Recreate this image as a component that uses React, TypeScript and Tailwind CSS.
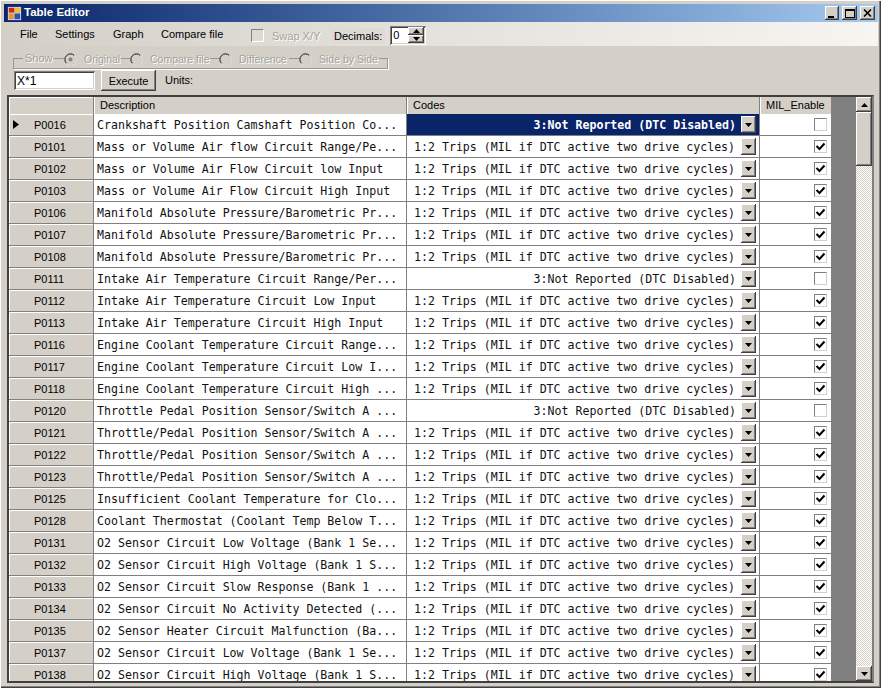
const raised =
  "shadow-[inset_-1px_-1px_#404040,inset_1px_1px_#ffffff,inset_-2px_-2px_#808080,inset_2px_2px_#d4d0c8] bg-[#d4d0c8]";
const sunken =
  "shadow-[inset_1px_1px_#808080,inset_-1px_-1px_#ffffff,inset_2px_2px_#404040,inset_-2px_-2px_#d4d0c8]";

const TRIPS = "1:2 Trips (MIL if DTC active two drive cycles)";
const OFF = "3:Not Reported (DTC Disabled)";

const rows = [
  { code: "P0016", desc: "Crankshaft Position Camshaft Position Co...", off: true },
  { code: "P0101", desc: "Mass or Volume Air flow Circuit Range/Pe..." },
  { code: "P0102", desc: "Mass or Volume Air Flow Circuit low Input" },
  { code: "P0103", desc: "Mass or Volume Air Flow Circuit High Input" },
  { code: "P0106", desc: "Manifold Absolute Pressure/Barometric Pr..." },
  { code: "P0107", desc: "Manifold Absolute Pressure/Barometric Pr..." },
  { code: "P0108", desc: "Manifold Absolute Pressure/Barometric Pr..." },
  { code: "P0111", desc: "Intake Air Temperature Circuit Range/Per...", off: true },
  { code: "P0112", desc: "Intake Air Temperature Circuit Low Input" },
  { code: "P0113", desc: "Intake Air Temperature Circuit High Input" },
  { code: "P0116", desc: "Engine Coolant Temperature Circuit Range..." },
  { code: "P0117", desc: "Engine Coolant Temperature Circuit Low I..." },
  { code: "P0118", desc: "Engine Coolant Temperature Circuit High ..." },
  { code: "P0120", desc: "Throttle Pedal Position Sensor/Switch A ...", off: true },
  { code: "P0121", desc: "Throttle/Pedal Position Sensor/Switch A ..." },
  { code: "P0122", desc: "Throttle/Pedal Position Sensor/Switch A ..." },
  { code: "P0123", desc: "Throttle/Pedal Position Sensor/Switch A ..." },
  { code: "P0125", desc: "Insufficient Coolant Temperature for Clo..." },
  { code: "P0128", desc: "Coolant Thermostat (Coolant Temp Below T..." },
  { code: "P0131", desc: "O2 Sensor Circuit Low Voltage (Bank 1 Se..." },
  { code: "P0132", desc: "O2 Sensor Circuit High Voltage (Bank 1 S..." },
  { code: "P0133", desc: "O2 Sensor Circuit Slow Response (Bank 1 ..." },
  { code: "P0134", desc: "O2 Sensor Circuit No Activity Detected (..." },
  { code: "P0135", desc: "O2 Sensor Heater Circuit Malfunction (Ba..." },
  { code: "P0137", desc: "O2 Sensor Circuit Low Voltage (Bank 1 Se..." },
  { code: "P0138", desc: "O2 Sensor Circuit High Voltage (Bank 1 S..." },
];

function Arrow({ up = false }: { up?: boolean }) {
  return (
    <svg width="7" height="4" viewBox="0 0 7 4" className="block">
      <path d={up ? "M3.5 0L7 4H0z" : "M0 0h7L3.5 4z"} fill="#000" />
    </svg>
  );
}

function Radio({ on = false }: { on?: boolean }) {
  return (
    <svg width="13" height="13" viewBox="0 0 13 13" className="shrink-0">
      <circle cx="6.5" cy="6.5" r="5.5" fill="#d4d0c8" stroke="#808080" />
      <path d="M2.5 10.5A5.5 5.5 0 0 1 10.5 2.5" fill="none" stroke="#404040" />
      <path d="M2.5 10.5A5.5 5.5 0 0 0 10.5 2.5" fill="none" stroke="#ffffff" />
      {on && <circle cx="6.5" cy="6.5" r="2" fill="#808080" />}
    </svg>
  );
}

function Disabled({ children }: { children: string }) {
  return <span className="text-[#a5a29a] whitespace-nowrap [text-shadow:1px_1px_#ffffff]">{children}</span>;
}

function ShowOption({ label, on = false, className }: { label: string; on?: boolean; className: string }) {
  return (
    <div className={`flex items-center gap-[7px] bg-[#d4d0c8] h-[13px] -mt-[6px] text-[10.5px] ${className}`}>
      <Radio on={on} />
      <Disabled>{label}</Disabled>
    </div>
  );
}

function CellCheck({ checked }: { checked: boolean }) {
  return (
    <div className="w-[13px] h-[13px] bg-white border border-t-[#808080] border-l-[#808080] border-r-[#d4d0c8] border-b-[#d4d0c8] flex items-center justify-center">
      {checked && (
        <svg width="11" height="11" viewBox="0 0 11 11">
          <path d="M1.5 5L4.5 8L9.5 2.5" fill="none" stroke="#000" strokeWidth="2" />
        </svg>
      )}
    </div>
  );
}

function Row({ row, selected }: { row: (typeof rows)[number]; selected: boolean }) {
  return (
    <div className="flex h-[22px] shrink-0 w-[822px]">
      <div className="w-[85px] shrink-0 bg-[#d4d0c8] border-b border-r border-[#808080] shadow-[inset_1px_1px_#ffffff] relative flex items-center pl-[25px] pt-[1px]">
        {selected && (
          <svg width="6" height="9" viewBox="0 0 6 9" className="absolute left-[4px] top-[6px]">
            <path d="M0 0l6 4.5L0 9z" fill="#000" />
          </svg>
        )}
        {row.code}
      </div>
      <div className="w-[313px] shrink-0 bg-white border-b border-r border-[#808080] pl-[3px] pt-[2px] flex items-center font-['DejaVu_Sans_Mono',monospace] text-[11.6px] whitespace-pre text-[#111111]">
        {row.desc}
      </div>
      <div
        className={`w-[353px] shrink-0 border-b border-r border-[#808080] flex items-center pr-[3px] font-['DejaVu_Sans_Mono',monospace] text-[11.6px] whitespace-pre ${
          selected ? "bg-[#0a246a] text-white font-bold" : "bg-white text-[#111111]"
        }`}
      >
        <span className={`flex-1 pt-[2px] ${row.off ? "text-right pr-[5px]" : "pl-[7px]"}`}>{row.off ? OFF : TRIPS}</span>
        <div className={`w-[15px] h-[17px] flex items-center justify-center shrink-0 ${raised}`}>
          <Arrow />
        </div>
      </div>
      <div className="w-[71px] shrink-0 bg-white border-b border-[#808080] flex items-center pl-[54px]">
        <CellCheck checked={!row.off} />
      </div>
    </div>
  );
}

export default function App() {
  return (
    <div className="w-[881px] h-[688px] overflow-hidden bg-[#d4d0c8] font-['Liberation_Sans',sans-serif] text-[11px] text-black flex flex-col pt-[4px] pl-[4px] pr-[3px] pb-[5px] shadow-[inset_1px_1px_#ffffff,inset_-1px_-1px_#404040,inset_-2px_-2px_#808080]">
      {/* Title bar */}
      <div className="h-[18px] shrink-0 flex items-center bg-gradient-to-r from-[#0a246a] to-[#a6caf0] pl-[3px] pr-[3px]">
        <svg width="15" height="15" viewBox="0 0 16 16" className="shrink-0">
          <rect x="0.5" y="0.5" width="15" height="15" fill="#c8d0e8" stroke="#203080" />
          <rect x="2" y="2" width="6" height="5" fill="#d02818" />
          <rect x="8" y="2" width="6" height="5" fill="#f0c020" />
          <rect x="2" y="8" width="5" height="6" fill="#f09020" />
          <rect x="8" y="8" width="6" height="6" fill="#3050b0" />
        </svg>
        <span className="ml-[2px] text-white font-bold text-[11.5px]">Table Editor</span>
        <div className={`ml-auto w-[14px] h-[14px] flex items-end pb-[2px] pl-[3px] ${raised}`}>
          <div className="w-[6px] h-[2px] bg-black" />
        </div>
        <div className={`ml-[3px] w-[15px] h-[14px] flex items-center justify-center ${raised}`}>
          <div className="w-[10px] h-[9px] border border-t-2 border-black" />
        </div>
        <div className={`ml-[3px] w-[15px] h-[14px] flex items-center justify-center ${raised}`}>
          <svg width="9" height="8" viewBox="0 0 9 8">
            <path d="M1 0.5L8 7.5M8 0.5L1 7.5" stroke="#000" strokeWidth="1.6" />
          </svg>
        </div>
      </div>

      {/* Menu strip */}
      <div className="h-[24px] shrink-0 bg-gradient-to-r from-[#d4d0c8] to-[#f6f5f2] flex items-center whitespace-nowrap">
        <span className="ml-[16px] mt-[1px] w-[17px]">File</span>
        <span className="ml-[18px] mt-[1px] w-[40px]">Settings</span>
        <span className="ml-[18px] mt-[1px] w-[30px]">Graph</span>
        <span className="ml-[18px] mt-[1px] w-[60px]">Compare file</span>
        <div className="ml-[30px] mt-[2px] w-[13px] h-[13px] border border-t-[#808080] border-l-[#808080] border-r-white border-b-white" />
        <span className="ml-[8px] mt-[4px] w-[48px]">
          <Disabled>Swap X/Y</Disabled>
        </span>
        <span className="ml-[11px] mt-[3px] bg-[#dedbd5] px-[3px] leading-[16px]">Decimals:</span>
        <div className={`ml-[5px] w-[36px] h-[19px] bg-white flex items-center pl-[3px] pr-[2px] mt-[2px] ${sunken}`}>
          <span className="flex-1">0</span>
          <div className="flex flex-col w-[16px]">
            <div className={`h-[8px] flex items-center justify-center ${raised}`}>
              <Arrow up />
            </div>
            <div className={`h-[8px] flex items-center justify-center ${raised}`}>
              <Arrow />
            </div>
          </div>
        </div>
      </div>

      {/* Show group */}
      <div className="ml-[9px] mt-[12px] w-[375px] h-[11px] shrink-0 border border-[#9a978f] shadow-[1px_1px_#ffffff] flex items-start">
        <span className="ml-[9px] -mt-[7px] leading-[13px] bg-[#d4d0c8] px-[2px] w-[30px]">
          <Disabled>Show</Disabled>
        </span>
        <ShowOption on label="Original" className="ml-[11px] w-[56px]" />
        <ShowOption label="Compare file" className="ml-[10px] w-[80px]" />
        <ShowOption label="Difference" className="ml-[9px] w-[70px]" />
        <ShowOption label="Side by Side" className="ml-[10px] w-[80px]" />
      </div>

      {/* Expression row */}
      <div className="flex items-start shrink-0 mt-[1px] h-[25px]">
        <div className={`ml-[10px] w-[81px] h-[19px] mt-[1px] bg-white flex items-center pl-[3px] text-[12px] ${sunken}`}>X*1</div>
        <div className={`ml-[6px] w-[55px] h-[21px] pt-[2px] flex items-center justify-center ${raised}`}>Execute</div>
        <span className="ml-[9px] mt-[2px]">Units:</span>
      </div>

      {/* Grid */}
      <div className="ml-[3px] w-[867px] flex-1 min-h-0 border-2 border-t-[#404040] border-l-[#404040] border-r-[#808080] border-b-[#404040] flex bg-[#808080] overflow-hidden">
        <div className="w-[822px] shrink-0 flex flex-col overflow-hidden">
          <div className="flex h-[17px] shrink-0 bg-[#d4d0c8]">
            <div className="w-[85px] border-r border-[#808080] shadow-[inset_1px_1px_#ffffff]" />
            <div className="w-[313px] border-r border-[#808080] shadow-[inset_1px_0_#ffffff] pl-[6px] flex items-center">Description</div>
            <div className="w-[353px] border-r border-[#808080] shadow-[inset_1px_0_#ffffff] pl-[6px] flex items-center">Codes</div>
            <div className="w-[71px] shadow-[inset_1px_0_#ffffff] pl-[6px] flex items-center">MIL_Enable</div>
          </div>
          {rows.map((row, i) => (
            <Row key={row.code} row={row} selected={i === 0} />
          ))}
        </div>
        <div className="flex-1" />
        {/* Scrollbar */}
        <div className="w-[16px] shrink-0 flex flex-col bg-[#e8e6e1] bg-[repeating-conic-gradient(#d4d0c8_0_25%,#ffffff_0_50%)] bg-[length:2px_2px]">
          <div className={`h-[15px] shrink-0 flex items-center justify-center ${raised}`}>
            <Arrow up />
          </div>
          <div className={`h-[54px] shrink-0 ${raised}`} />
          <div className="flex-1" />
          <div className={`h-[15px] shrink-0 flex items-center justify-center ${raised}`}>
            <Arrow />
          </div>
        </div>
      </div>
    </div>
  );
}
